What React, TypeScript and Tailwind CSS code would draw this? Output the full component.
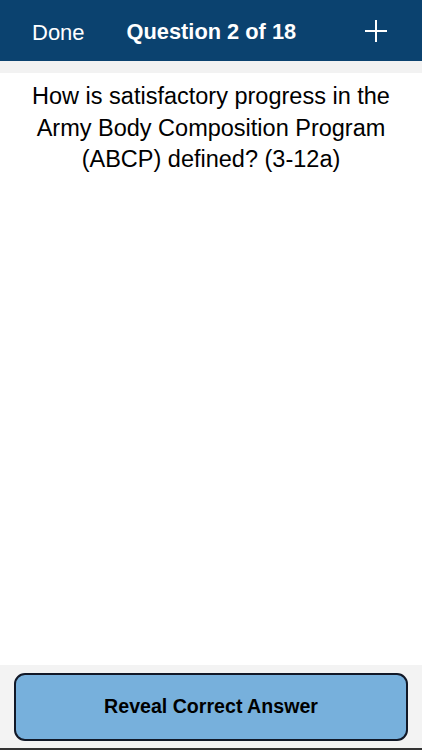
export default function App() {
  return (
    <div
      className="flex h-[750px] w-[422px] flex-col bg-white"
      style={{ fontFamily: '"Liberation Sans", Arial, sans-serif' }}
    >
      {/* Nav bar */}
      <div className="relative flex h-[61px] items-center bg-[#0b426f] pt-[3px] text-white">
        <span className="pl-[32px] text-[22px]">Done</span>
        <span className="pl-[42px] text-[21.8px] font-bold">Question 2 of 18</span>
        <svg
          className="absolute right-[34px] top-[19px]"
          width="24"
          height="24"
          viewBox="0 0 24 24"
          fill="none"
          stroke="white"
          strokeWidth="2"
        >
          <path d="M12 1v22M1 12h22" />
        </svg>
      </div>
      <div className="h-[12px] bg-[#f2f2f2]" />

      {/* Question */}
      <div className="flex-1 px-4 pt-[8px] text-center text-[23.5px] leading-[31.5px] text-black">
        How is satisfactory progress in the Army Body Composition Program (ABCP) defined? (3-12a)
      </div>

      {/* Bottom */}
      <div className="flex h-[85px] flex-col bg-[#f3f3f3]">
        <div className="px-[14px] pt-[8px]">
          <button className="flex h-[68px] w-full items-center justify-center rounded-[11px] border-2 border-[#111827] bg-[#77b0dc] text-[19.6px] font-bold text-black">
            Reveal Correct Answer
          </button>
        </div>
        <div className="mt-auto h-[2px] bg-[#333]" />
      </div>
    </div>
  );
}
